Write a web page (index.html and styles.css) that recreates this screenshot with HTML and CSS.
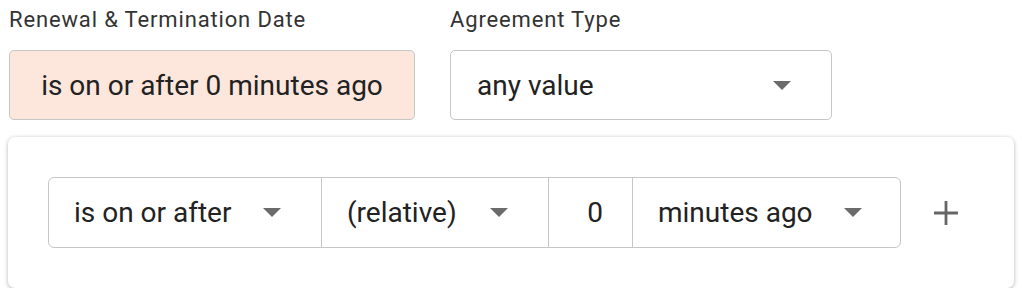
FILE: index.html
```html
<!DOCTYPE html>
<html>
<head>
<meta charset="utf-8">
<link rel="stylesheet" href="styles.css">
</head>
<body>
<div class="page">
  <div class="filters">
    <div class="filter">
      <div class="label">Renewal &amp; Termination Date</div>
      <div class="pill pill-active">is on or after 0 minutes ago</div>
    </div>
    <div class="filter">
      <div class="label">Agreement Type</div>
      <div class="pill pill-select">
        <span>any value</span>
        <svg class="caret" width="18" height="9" viewBox="0 0 18 9"><path d="M0 0H18L9 9Z"/></svg>
      </div>
    </div>
  </div>
  <div class="card">
    <div class="group">
      <div class="seg seg-op">
        <span>is on or after</span>
        <svg class="caret" width="18" height="9" viewBox="0 0 18 9"><path d="M0 0H18L9 9Z"/></svg>
      </div>
      <div class="seg seg-mode">
        <span>(relative)</span>
        <svg class="caret" width="18" height="9" viewBox="0 0 18 9"><path d="M0 0H18L9 9Z"/></svg>
      </div>
      <div class="seg seg-num">0</div>
      <div class="seg seg-unit">
        <span>minutes ago</span>
        <svg class="caret" width="18" height="9" viewBox="0 0 18 9"><path d="M0 0H18L9 9Z"/></svg>
      </div>
    </div>
    <svg class="plus" width="24" height="24" viewBox="0 0 24 24"><path d="M12 0V24M0 12H24" stroke="#666666" stroke-width="2.8"/></svg>
  </div>
</div>
</body>
</html>
```

FILE: styles.css
```css
* { box-sizing: border-box; }
html, body { margin: 0; padding: 0; background: #ffffff; }
body { font-family: Roboto, "Liberation Sans", sans-serif; color: #222; }

.page { padding: 0 8px; }

.filters {
  display: flex;
  gap: 35px;
  padding-left: 1px;
}
.filter { display: flex; flex-direction: column; }
.label {
  font-size: 22px;
  letter-spacing: 0.85px;
  line-height: 24px;
  color: #333;
  padding-top: 8px;
  height: 50px;
}
.pill {
  height: 70px;
  border: 1px solid #c6c6c6;
  border-radius: 5px;
  font-size: 28px;
  display: flex;
  align-items: center;
}
.pill-active {
  width: 406px;
  background: #fde7dc;
  justify-content: center;
}
.pill-select {
  width: 382px;
  background: #fff;
  justify-content: space-between;
  padding: 0 40px 0 26px;
}
.caret { fill: #6b6b6b; flex: none; }

.card {
  margin-top: 17px;
  width: 1006px;
  height: 151px;
  background: #fff;
  border-radius: 7px;
  box-shadow: 0 1px 4px rgba(0,0,0,0.3);
  display: flex;
  align-items: center;
  padding-left: 40px;
  gap: 33px;
}
.group {
  display: flex;
  height: 71px;
  border: 1px solid #c6c6c6;
  border-radius: 6px;
}
.seg {
  display: flex;
  align-items: center;
  justify-content: space-between;
  font-size: 28px;
  padding: 0 40px 0 25px;
}
.seg + .seg { border-left: 1px solid #c6c6c6; }
.seg-op { width: 272px; }
.seg-mode { width: 227px; }
.seg-num { width: 84px; justify-content: flex-end; padding: 0 29px 0 0; }
.seg-unit { width: 268px; padding-right: 38px; }
.plus { flex: none; }
```
